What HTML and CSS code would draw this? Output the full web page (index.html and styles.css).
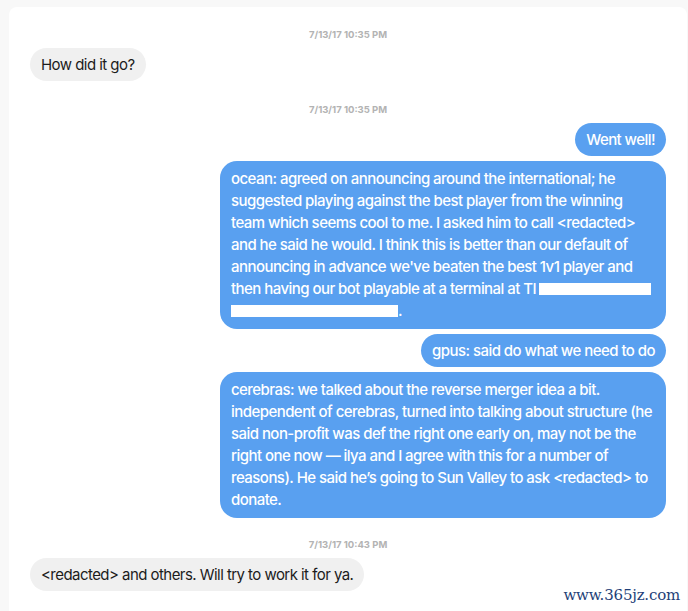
FILE: index.html
```html
<!DOCTYPE html>
<html lang="en">
<head>
    <meta charset="UTF-8">
    <meta name="viewport" content="width=device-width, initial-scale=1.0">
    <title>Chat</title>
    <link rel="stylesheet" href="styles.css">
</head>
<body>
    <main class="chat">
        <p class="stamp">7/13/17 10:35 PM</p>
        <div class="row them">
            <p class="bubble">How did it go?</p>
        </div>

        <p class="stamp">7/13/17 10:35 PM</p>
        <div class="row me">
            <p class="bubble">Went well!</p>
        </div>
        <div class="row me">
            <p class="bubble wide">ocean: agreed on announcing around the international; he<br>suggested playing against the best player from the winning<br>team which seems cool to me. I asked him to call &lt;redacted&gt;<br>and he said he would. I think this is better than our default of<br>announcing in advance we've beaten the best 1v1 player and<br>then having our bot playable at a terminal at TI <span class="redact r1"></span><br><span class="redact r2"></span>.</p>
        </div>
        <div class="row me">
            <p class="bubble">gpus: said do what we need to do</p>
        </div>
        <div class="row me end">
            <p class="bubble wide">cerebras: we talked about the reverse merger idea a bit.<br>independent of cerebras, turned into talking about structure (he<br>said non-profit was def the right one early on, may not be the<br>right one now — ilya and I agree with this for a number of<br>reasons). He said he’s going to Sun Valley to ask &lt;redacted&gt; to<br>donate.</p>
        </div>

        <p class="stamp">7/13/17 10:43 PM</p>
        <div class="row them">
            <p class="bubble">&lt;redacted&gt; and others. Will try to work it for ya.</p>
        </div>
    </main>

    <span class="mark">www.365jz.com</span>
</body>
</html>
```

FILE: styles.css
```css
*,
*::after,
*::before{
    box-sizing: border-box;
    margin: 0;
    padding: 0;
}
body{
    background-color: #f8f8f8;
    font-family: Inter, "Noto Sans", sans-serif;
    height: 611px;
    overflow: hidden;
}
.chat{
    background-color: #fff;
    margin: 7px 1px 0 9px;
    border-radius: 8px 8px 0 0;
    padding: 22px 21px 0;
    height: 604px;
    display: flex;
    flex-direction: column;
}
.stamp{
    text-align: center;
    font-size: 9.5px;
    font-weight: 700;
    color: #b3b3b3;
    line-height: 12px;
    margin-bottom: 7px;
}
.row{
    display: flex;
    margin-bottom: 5px;
}
.row.them{
    justify-content: flex-start;
    margin-bottom: 23px;
}
.row.me{
    justify-content: flex-end;
}
.row.end{
    margin-bottom: 21px;
}
.bubble{
    font-size: 15px;
    line-height: 22px;
    letter-spacing: -0.55px;
    padding: 5.5px 11px;
    border-radius: 17px;
    white-space: nowrap;
}
.them .bubble{
    background-color: #f0f0f0;
    color: #1c1c1c;
}
.me .bubble{
    background-color: #59a0f0;
    color: #fff;
    font-weight: 500;
}
.bubble.wide{
    width: 446px;
    padding: 7px 11px;
}
.redact{
    display: inline-block;
    background-color: #fff;
    height: 12px;
    vertical-align: -1px;
}
.r1{
    width: 112px;
}
.r2{
    width: 167px;
}
/* marca de agua abajo a la derecha */
.mark{
    position: absolute;
    right: 8px;
    top: 586px;
    font-family: "DejaVu Serif", serif;
    font-size: 15px;
    color: #1f3f78;
    letter-spacing: -0.2px;
}
```
